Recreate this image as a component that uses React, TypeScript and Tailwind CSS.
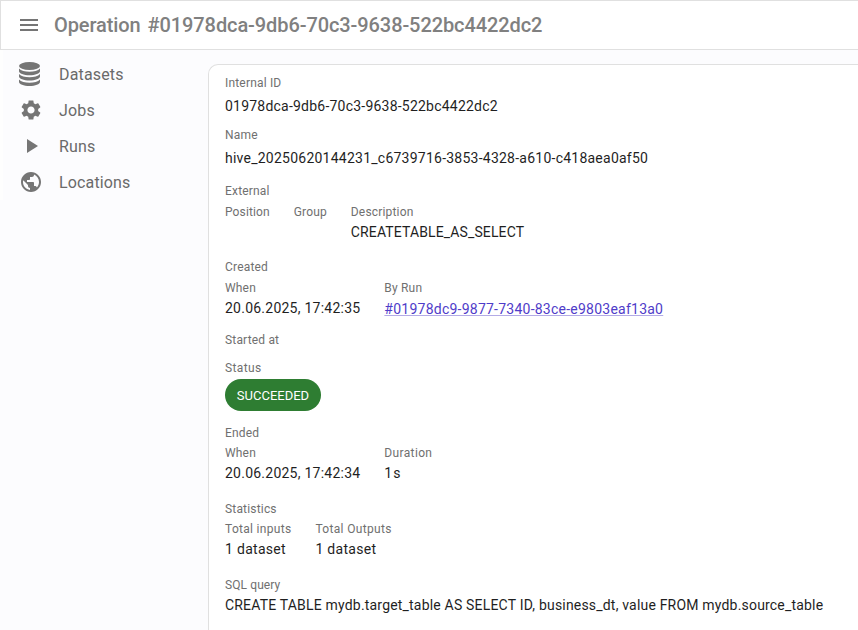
import React from "react";

const Label = ({ children, className = "", tracking = "tracking-[0.18px]" }: { children: React.ReactNode; className?: string; tracking?: string }) => (
  <div className={`whitespace-pre text-[12px] leading-5 text-[#707070] ${tracking} ${className}`}>{children}</div>
);

const Value = ({ children, className = "", tracking = "tracking-[0.24px]" }: { children: React.ReactNode; className?: string; tracking?: string }) => (
  <div className={`whitespace-pre text-[14px] leading-5 text-[#1f1f1f] ${tracking} ${className}`}>{children}</div>
);

const items = [
  { label: "Datasets", d: "" },
  {
    label: "Jobs",
    d: "M19.14 12.94c.04-.3.06-.61.06-.94 0-.32-.02-.64-.07-.94l2.03-1.58c.18-.14.23-.41.12-.61l-1.92-3.32c-.12-.22-.37-.29-.59-.22l-2.39.96c-.5-.38-1.03-.7-1.62-.94l-.36-2.54c-.04-.24-.24-.41-.48-.41h-3.84c-.24 0-.43.17-.47.41l-.36 2.54c-.59.24-1.13.57-1.62.94l-2.39-.96c-.22-.08-.47 0-.59.22L2.74 8.87c-.12.21-.08.47.12.61l2.03 1.58c-.05.3-.09.63-.09.94s.02.64.07.94l-2.03 1.58c-.18.14-.23.41-.12.61l1.92 3.32c.12.22.37.29.59.22l2.39-.96c.5.38 1.03.7 1.62.94l.36 2.54c.05.24.24.41.48.41h3.84c.24 0 .44-.17.47-.41l.36-2.54c.59-.24 1.13-.56 1.62-.94l2.39.96c.22.08.47 0 .59-.22l1.92-3.32c.12-.22.07-.47-.12-.61zM12 15.6c-1.98 0-3.6-1.62-3.6-3.6s1.62-3.6 3.6-3.6 3.6 1.62 3.6 3.6-1.62 3.6-3.6 3.6",
  },
  { label: "Runs", d: "M8 5v14l11-7z" },
  {
    label: "Locations",
    d: "M12 2C6.48 2 2 6.48 2 12s4.48 10 10 10 10-4.48 10-10S17.52 2 12 2m-1 17.93c-3.95-.49-7-3.85-7-7.93 0-.62.08-1.21.21-1.79L9 15v1c0 1.1.9 2 2 2zm6.9-2.54c-.26-.81-1-1.39-1.9-1.39h-1v-3c0-.55-.45-1-1-1H8v-2h2c.55 0 1-.45 1-1V7h2c1.1 0 2-.9 2-2v-.41c2.93 1.19 5 4.06 5 7.41 0 2.08-.8 3.97-2.1 5.39",
  },
];

function Database() {
  return (
    <svg className="ml-px" width="21" height="24" viewBox="0 0 21 24" fill="currentColor">
      <ellipse cx="10.5" cy="4" rx="10.5" ry="4" />
      <path d="M0 6.6C2 9 6 9.8 10.5 9.8S19 9 21 6.6V9.200C21 11.500 16.300 13.200 10.500 13.200S0 11.500 0 9.200z" />
      <path d="M0 12C2 14.400 6 15.200 10.500 15.200S19 14.400 21 12V14.500C21 16.800 16.300 18.500 10.500 18.500S0 16.800 0 14.500z" />
      <path d="M0 17.500C2 19.900 6 20.700 10.500 20.700S19 19.900 21 17.500V20C21 22.300 16.300 24 10.500 24S0 22.300 0 20z" />
    </svg>
  );
}

export default function App() {
  return (
    <div className="flex h-[630px] w-[858px] flex-col overflow-hidden bg-[#fcfcfe] font-['Roboto',sans-serif]">
      <header className="flex h-[50px] shrink-0 items-center border border-r-0 border-[#e0e0e0] bg-white pl-4 text-[#757575]">
        <svg width="24" height="24" viewBox="0 0 24 24" fill="currentColor">
          <path d="M3 18h18v-2H3zm0-5h18v-2H3zm0-7v2h18V6z" />
        </svg>
        <h1 className="ml-[13px] whitespace-pre text-[20px] font-medium tracking-[-0.09px] text-[#808080] [word-spacing:2px]">Operation #01978dca-9db6-70c3-9638-522bc4422dc2</h1>
      </header>
      <div className="flex min-h-0 flex-1">
        <nav className="flex h-[150px] w-[208px] shrink-0 flex-col border-l-[3px] border-[#fefefe] pt-[6px]">
          {items.map(({ label, d }) => (
            <a key={label} className="flex h-9 shrink-0 items-center pl-[15px] text-[#6a6a6a]">
              <span className="flex w-[41px] items-center text-[#757575]">
                {d ? (
                  <svg className="ml-px" width="24" height="24" viewBox="0 0 24 24" fill="currentColor"><path d={d} /></svg>
                ) : (
                  <Database />
                )}
              </span>
              <span className="pt-0.5 text-[16px] tracking-[0.15px]">{label}</span>
            </a>
          ))}
        </nav>
        <main className="mt-[14px] flex-1 rounded-tl-[10px] border-l border-t border-[#e0e0e0] bg-white pl-4 pt-2">
          <Label>Internal ID</Label>
          <Value className="mt-[3px]" tracking="tracking-[0.22px]">01978dca-9db6-70c3-9638-522bc4422dc2</Value>
          <Label className="mt-[9px]">Name</Label>
          <Value className="mt-[3px]">hive_20250620144231_c6739716-3853-4328-a610-c418aea0af50</Value>
          <Label className="mt-[13px]">External</Label>
          <div className="mt-px flex gap-6">
            <Label tracking="tracking-[0.13px]">Position</Label>
            <Label tracking="tracking-[0.13px]">Group</Label>
            <div><Label>Description</Label><Value tracking="tracking-[0.13px]">CREATETABLE_AS_SELECT</Value></div>
          </div>
          <Label className="mt-[15px]">Created</Label>
          <div className="mt-px flex gap-6">
            <div><Label>When</Label><Value>20.06.2025, 17:42:35</Value></div>
            <div><Label>By Run</Label><Value className="mt-px"><a className="text-[#4f3cc9] underline decoration-[#b3abe6]">#01978dc9-9877-7340-83ce-e9803eaf13a0</a></Value></div>
          </div>
          <Label className="mt-[11px]">Started at</Label>
          <Label className="mt-2" tracking="tracking-[0.4px]">Status</Label>
          <div className="mt-px flex h-8 w-24 items-center justify-center rounded-full bg-[#2e7d32] pt-0.5 text-[13px] text-white">SUCCEEDED</div>
          <Label className="mt-3">Ended</Label>
          <div className="flex gap-6">
            <div><Label>When</Label><Value>20.06.2025, 17:42:34</Value></div>
            <div><Label tracking="tracking-[0.35px]">Duration</Label><Value className="[word-spacing:-3px]">1 s</Value></div>
          </div>
          <Label className="mt-4">Statistics</Label>
          <div className="flex gap-6">
            <div><Label tracking="tracking-[0.3px]">Total inputs</Label><Value tracking="tracking-[0.3px]">1 dataset</Value></div>
            <div><Label tracking="tracking-[0.33px]">Total Outputs</Label><Value tracking="tracking-[0.3px]">1 dataset</Value></div>
          </div>
          <Label className="mt-4" tracking="tracking-[0.1px]">SQL query</Label>
          <Value tracking="tracking-[0.19px]">CREATE TABLE mydb.target_table AS SELECT ID, business_dt, value FROM mydb.source_table</Value>
        </main>
      </div>
    </div>
  );
}
